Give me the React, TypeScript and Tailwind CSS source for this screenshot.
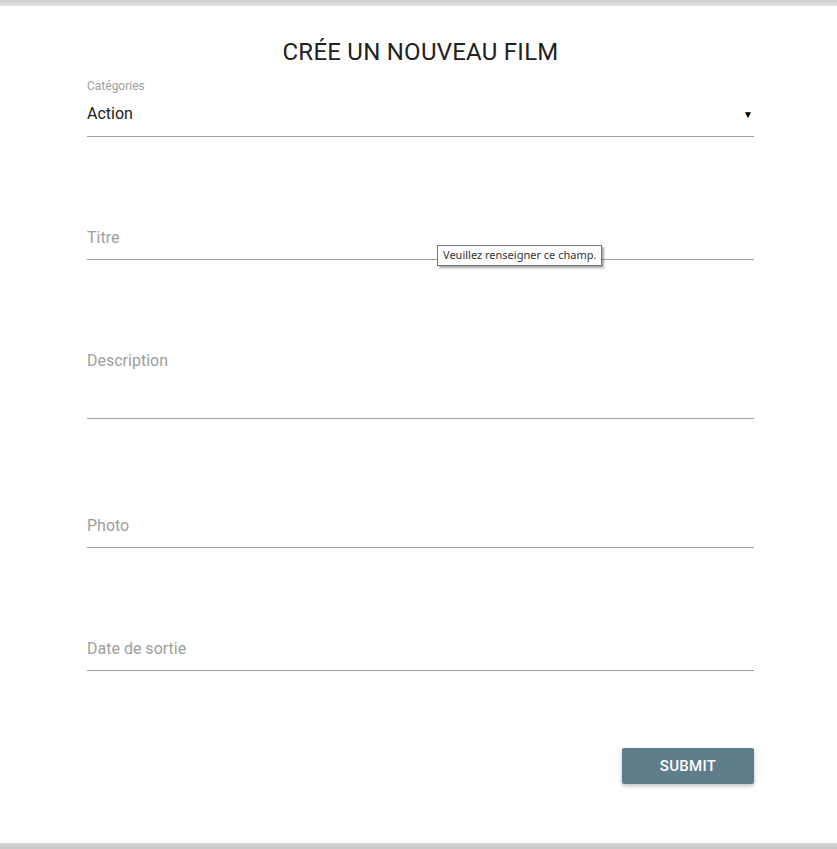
import React from "react";

const Field = ({ label, mt, pb }: { label: string; mt: string; pb: string }) => (
  <div className={`${mt} ${pb} pt-[17px] border-b border-[#9e9e9e] text-[16px] leading-[20px] text-[#9e9e9e]`}>
    {label}
  </div>
);

export default function App() {
  return (
    <div className="h-[849px] flex flex-col bg-white" style={{ fontFamily: "Roboto, 'Liberation Sans', sans-serif" }}>
      {/* top shadow band */}
      <div className="h-[6px] bg-gradient-to-b from-[#cccccc] to-[#e4e4e4]" />

      <main className="flex-1 bg-white pl-[87px] pr-[83px]">
        <h1 className="mt-[30px] text-center text-[24px] leading-[32px] tracking-[0.25px] text-[#212121] font-normal">
          CRÉE UN NOUVEAU FILM
        </h1>

        {/* select */}
        <div className="mt-[12px] text-[12px] leading-[12px] text-[#9e9e9e]">Catégories</div>
        <div className="h-[45px] flex items-center justify-between border-b border-[#9e9e9e] text-[16px] text-[#212121]">
          <span>Action</span>
          <span className="text-[10px] text-black pr-[1px]">▼</span>
        </div>

        <div className="relative">
          <Field label="Titre" mt="mt-[74px]" pb="pb-[11px]" />
          <div className="absolute left-[350px] top-[34px] h-[21px] px-[5px] flex items-center bg-white border border-[#767676] text-[11px] text-[#333] shadow-[2px_2px_2px_rgba(0,0,0,0.35)] whitespace-nowrap" style={{ fontFamily: "'Noto Sans', 'Open Sans', sans-serif" }}>
            Veuillez renseigner ce champ.
          </div>
        </div>

        <Field label="Description" mt="mt-[74px]" pb="pb-[47px]" />
        <Field label="Photo" mt="mt-[80px]" pb="pb-[11px]" />
        <Field label="Date de sortie" mt="mt-[74px]" pb="pb-[11px]" />

        <div className="mt-[77px] flex justify-end">
          <button className="w-[132px] h-[36px] rounded-[2px] bg-[#607d8b] text-white text-[15px] font-medium tracking-[0.3px] uppercase shadow-[0_2px_4px_rgba(0,0,0,0.25)]">
            Submit
          </button>
        </div>
      </main>

      {/* bottom shadow band */}
      <div className="h-[6px] bg-gradient-to-b from-[#d8d8d8] to-[#c8c8c8]" />
    </div>
  );
}
